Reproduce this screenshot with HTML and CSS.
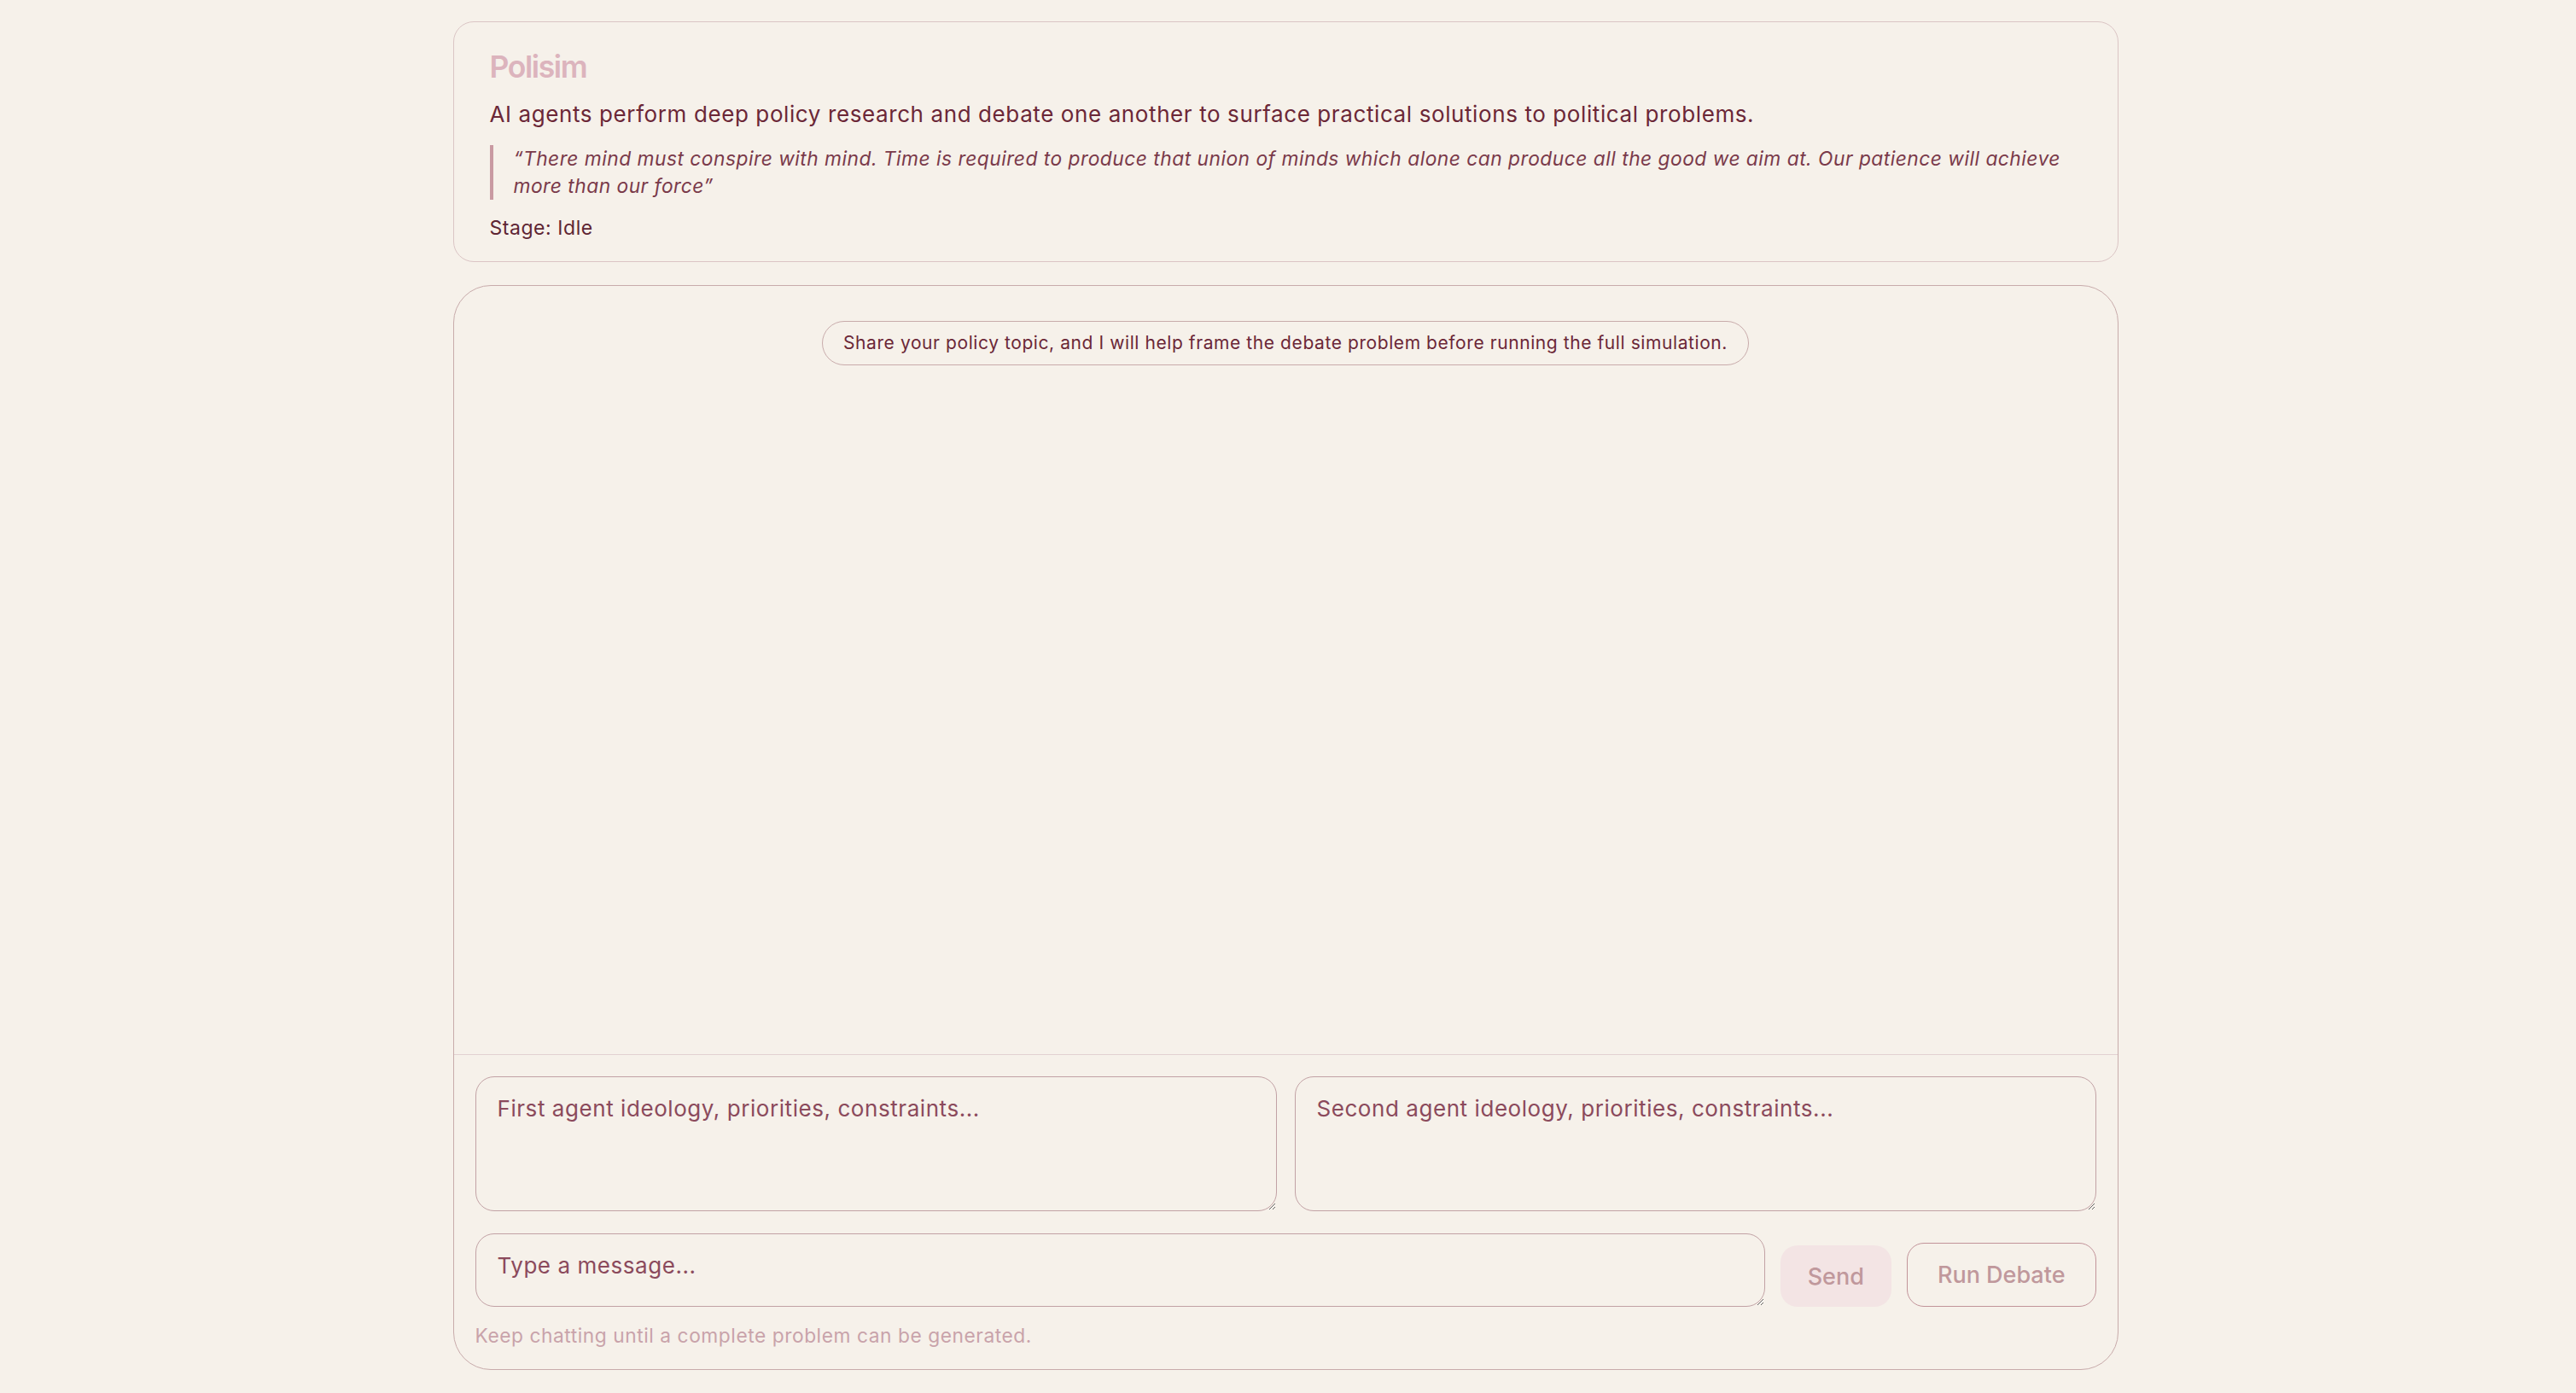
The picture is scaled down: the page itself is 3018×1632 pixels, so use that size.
FILE: index.html
```html
<!DOCTYPE html>
<html lang="en">
<head>
<meta charset="utf-8">
<title>Polisim</title>
<link rel="stylesheet" href="styles.css">
</head>
<body>
<div class="app">
  <header class="card intro">
    <h1 class="brand">Polisim</h1>
    <p class="tagline">AI agents perform deep policy research and debate one another to surface practical solutions to political problems.</p>
    <blockquote class="quote">“There mind must conspire with mind. Time is required to produce that union of minds which alone can produce all the good we aim at. Our patience will achieve more than our force”</blockquote>
    <p class="stage">Stage: Idle</p>
  </header>
  <main class="card chat">
    <div class="messages">
      <div class="bubble">Share your policy topic, and I will help frame the debate problem before running the full simulation.</div>
    </div>
    <div class="composer">
      <div class="agents">
        <textarea class="field agent" placeholder="First agent ideology, priorities, constraints..."></textarea>
        <textarea class="field agent" placeholder="Second agent ideology, priorities, constraints..."></textarea>
      </div>
      <div class="send-row">
        <textarea class="field message" placeholder="Type a message..."></textarea>
        <button class="btn send" type="button">Send</button>
        <button class="btn run" type="button">Run Debate</button>
      </div>
      <p class="hint">Keep chatting until a complete problem can be generated.</p>
    </div>
  </main>
</div>
</body>
</html>
```
FILE: styles.css
```css
* { box-sizing: border-box; }
html, body { height: 100%; }
body {
  margin: 0;
  padding: 25px 6px 27px 0;
  background: #f6f1ea;
  font-family: Inter, "Noto Sans", "Liberation Sans", sans-serif;
  color: #6b2737;
}
.app {
  width: 1951px;
  height: 100%;
  margin: 0 auto;
  display: flex;
  flex-direction: column;
  gap: 27px;
}
.card {
  background: #f6f1ea;
  border: 1px solid #dbc5c5;
}
.intro {
  border-radius: 24px;
  padding: 31px 42px 22px;
}
.brand {
  margin: 0;
  font-size: 35.5px;
  line-height: 44px;
  font-weight: 600;
  color: #dcb4bd;
  letter-spacing: -1.4px;
}
.tagline {
  margin: 13px 0 0;
  font-size: 26px;
  line-height: 39px;
  letter-spacing: 0.6px;
  color: #6b2737;
}
.quote {
  margin: 17px 0 0;
  padding-left: 24px;
  border-left: 4px solid #c99aa2;
  font-style: italic;
  font-size: 22.75px;
  line-height: 31.85px;
  letter-spacing: 0.5px;
  color: #7a3a4a;
}
.stage {
  margin: 16px 0 0;
  font-size: 23px;
  line-height: 34px;
  letter-spacing: 0.55px;
  color: #5e2533;
}
.chat {
  flex: 1;
  min-height: 0;
  border-color: #c8abab;
  border-radius: 44px;
  display: flex;
  flex-direction: column;
  overflow: hidden;
}
.messages {
  flex: 1;
  padding-top: 41px;
  display: flex;
  flex-direction: column;
  align-items: center;
}
.bubble {
  border: 1px solid #c8abab;
  border-radius: 999px;
  padding: 9px 24px;
  font-size: 21px;
  line-height: 32px;
  letter-spacing: 0.58px;
  color: #6b2737;
}
.composer {
  border-top: 1px solid #e2d1d1;
  padding: 25px 25px 23px;
  display: flex;
  flex-direction: column;
}
.agents {
  display: grid;
  grid-template-columns: 1fr 1fr;
  gap: 21px;
}
.field {
  display: block;
  width: 100%;
  margin: 0;
  background: #f6f1ea;
  border: 1px solid #c2a2a5;
  border-radius: 22px;
  padding: 17px 25px;
  font-family: inherit;
  font-size: 26px;
  line-height: 39px;
  letter-spacing: 0.56px;
  color: #6b2737;
  outline: none;
}
.field::placeholder { color: #8b4a5c; opacity: 1; }
.agent { height: 158px; }
.send-row {
  margin-top: 26px;
  display: flex;
  align-items: flex-end;
  gap: 18px;
}
.message {
  flex: 1;
  width: auto;
  height: 86px;
}
.btn {
  display: inline-flex;
  align-items: center;
  justify-content: center;
  margin: 0;
  font-family: inherit;
  font-size: 27px;
  font-weight: 500;
  border-radius: 20px;
  color: #c0989c;
}
.send {
  height: 72px;
  padding: 0 32px;
  border: none;
  background: #f3e4e4;
}
.run {
  height: 75px;
  padding: 0 35px;
  border: 1px solid #c2949a;
  background: transparent;
}
.hint {
  margin: 18px 0 0;
  font-size: 22.75px;
  line-height: 32px;
  letter-spacing: 0.55px;
  color: #c9a3aa;
}
```
